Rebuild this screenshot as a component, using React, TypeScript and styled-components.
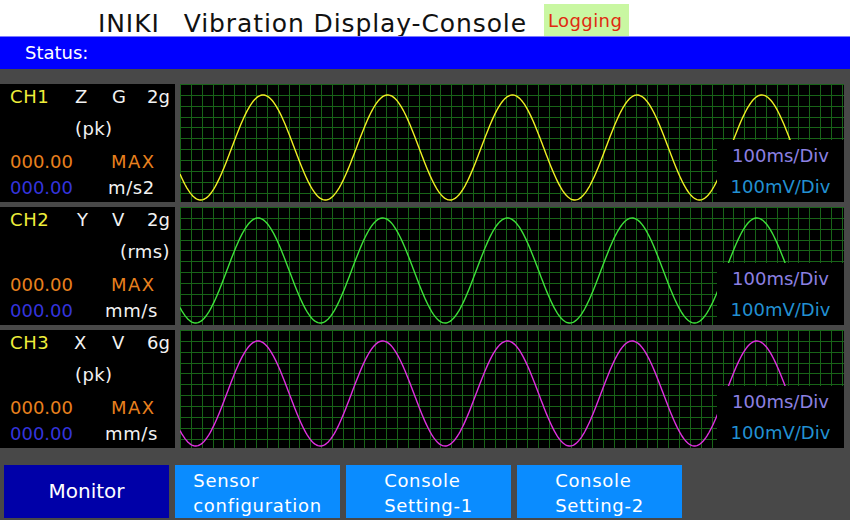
import React from "react";
import styled, { createGlobalStyle } from "styled-components";

const GlobalStyle = createGlobalStyle`
  html, body { margin: 0; padding: 0; background: #484848; }
  body { font-family: "DejaVu Sans", "Liberation Sans", sans-serif; }
  #root { width: 850px; height: 520px; overflow: hidden; }
`;

const Screen = styled.div`
  width: 850px;
  height: 520px;
  display: flex;
  flex-direction: column;
  background: #484848;
`;

const Header = styled.header`
  height: 36px;
  flex: none;
  background: #ffffff;
  display: flex;
  align-items: flex-start;
`;

const Title = styled.h1`
  margin: 0;
  padding: 11px 0 0 98px;
  font-size: 25px;
  line-height: 25px;
  font-weight: normal;
  letter-spacing: 0.9px;
  color: #111111;
  white-space: nowrap;
`;

const TitleGap = styled.span`
  display: inline-block;
  width: 24px;
`;

const Badge = styled.div`
  margin: 4px 0 0 17px;
  height: 32px;
  width: 85px;
  box-sizing: border-box;
  padding: 5px 0 0 4px;
  background: #c9f7a2;
  color: #e02a10;
  font-size: 18px;
  line-height: 24px;
  letter-spacing: 0.4px;
  white-space: nowrap;
`;

const StatusBar = styled.div`
  height: 33px;
  flex: none;
  box-sizing: border-box;
  background: #0000ff;
  border-top: 1px solid #7c7cff;
  color: #ffffff;
  font-size: 18px;
  line-height: 32px;
  padding-left: 25px;
`;

const Main = styled.main`
  flex: 1;
  display: flex;
  flex-direction: column;
  padding: 15px 6px 0 0;
`;

const ChannelList = styled.div`
  display: flex;
  flex-direction: column;
  gap: 5px;
`;

const ChannelRow = styled.section`
  height: 118px;
  display: flex;
  gap: 5px;
`;

const InfoPanel = styled.div`
  width: 175px;
  flex: none;
  background: #000000;
  box-sizing: border-box;
  padding: 0 5px 0 10px;
  display: grid;
  grid-template-columns: 65px 37px 35px 1fr;
  grid-template-rows: 26px 38px 28px 24px;
  align-items: center;
  font-size: 18px;
  line-height: 22px;
  color: #f2f2f2;
  white-space: nowrap;
`;

const Cell = styled.span<{ $color?: string; $col?: string; $align?: string; $shift?: number; $spacing?: number }>`
  color: ${(p) => p.$color ?? "#f2f2f2"};
  grid-column: ${(p) => p.$col ?? "auto"};
  justify-self: ${(p) => p.$align ?? "start"};
  margin-left: ${(p) => p.$shift ?? 0}px;
  letter-spacing: ${(p) => p.$spacing ?? 0}px;
`;

const Scope = styled.div`
  flex: 1;
  position: relative;
  background: #000000;
`;

const ScopeSvg = styled.svg`
  display: block;
`;

const ScaleBox = styled.div`
  position: absolute;
  right: 0;
  bottom: 0;
  width: 127px;
  height: 62px;
  background: #000000;
  display: grid;
  grid-template-rows: 31px 31px;
  align-items: center;
  justify-items: center;
  font-size: 18px;
  line-height: 22px;
  white-space: nowrap;
`;

const ScaleText = styled.span<{ $color: string }>`
  color: ${(p) => p.$color};
`;

const ButtonBar = styled.nav`
  margin-top: 17px;
  padding-left: 4px;
  height: 53px;
  display: flex;
  gap: 6px;
`;

const NavButton = styled.button<{ $active?: boolean }>`
  width: 165px;
  height: 53px;
  border: none;
  margin: 0;
  padding: ${(p) => (p.$active ? "0" : "3px 0 0")};
  background: ${(p) => (p.$active ? "#0000a8" : "#0a8cff")};
  color: #ffffff;
  font-family: "DejaVu Sans", "Liberation Sans", sans-serif;
  font-size: ${(p) => (p.$active ? "20px" : "18px")};
  letter-spacing: ${(p) => (p.$active ? "0" : "0.7px")};
  line-height: 25px;
  display: flex;
  align-items: center;
  justify-content: center;
  cursor: pointer;
`;

const ButtonLabel = styled.span`
  display: inline-block;
  text-align: left;
  white-space: nowrap;
`;

const W = 664;
const H = 118;
const STEP = 10.85;
const PERIOD = 124.7;

function wavePath(peak: number): string {
  const c = 63.5;
  const a = 52.5;
  let d = "";
  for (let x = 0; x <= W; x += 1) {
    const y = c - a * Math.cos((2 * Math.PI * (x - peak)) / PERIOD);
    d += `${x === 0 ? "M" : "L"}${x.toFixed(1)},${y.toFixed(2)} `;
  }
  return d;
}

const gridLines = (() => {
  const lines: React.ReactElement[] = [];
  for (let i = 0; i * STEP <= W; i++) {
    const x = Math.round(i * STEP) + 0.5;
    lines.push(<line key={`v${i}`} x1={x} y1={0} x2={x} y2={H} />);
  }
  for (let j = 0; j * STEP <= H; j++) {
    const y = Math.round(j * STEP) + 0.5;
    lines.push(<line key={`h${j}`} x1={0} y1={y} x2={W} y2={y} />);
  }
  return lines;
})();

type Channel = {
  name: string;
  axis: string;
  axisShift: number;
  kind: string;
  range: string;
  mode: string;
  modeRight: boolean;
  unit: string;
  unitShift: number;
  color: string;
  peak: number;
};

const channels: Channel[] = [
  { name: "CH1", axis: "Z", axisShift: 0, kind: "G", range: "2g", mode: "(pk)", modeRight: false, unit: "m/s2", unitShift: -4, color: "#f0f024", peak: 83 },
  { name: "CH2", axis: "Y", axisShift: 2, kind: "V", range: "2g", mode: "(rms)", modeRight: true, unit: "mm/s", unitShift: -7, color: "#3ee23a", peak: 78 },
  { name: "CH3", axis: "X", axisShift: -1, kind: "V", range: "6g", mode: "(pk)", modeRight: false, unit: "mm/s", unitShift: -7, color: "#e030e0", peak: 78 },
];

const ChannelView: React.FC<{ ch: Channel }> = ({ ch }) => (
  <ChannelRow>
    <InfoPanel>
      <Cell $color="#eeee3a" $spacing={0.6}>{ch.name}</Cell>
      <Cell $shift={ch.axisShift}>{ch.axis}</Cell>
      <Cell>{ch.kind}</Cell>
      <Cell $align="end">{ch.range}</Cell>
      {ch.modeRight ? (
        <Cell $col="1 / 5" $align="end" $spacing={0.4}>{ch.mode}</Cell>
      ) : (
        <Cell $col="2 / 5" $spacing={0.4}>{ch.mode}</Cell>
      )}
      <Cell $color="#e8801e" $col="1 / 3">000.00</Cell>
      <Cell $color="#e8801e" $col="3 / 5" $shift={-1} $spacing={1.4}>MAX</Cell>
      <Cell $color="#3434dc" $col="1 / 3">000.00</Cell>
      <Cell $col="3 / 5" $shift={ch.unitShift} $spacing={0.6}>{ch.unit}</Cell>
    </InfoPanel>
    <Scope>
      <ScopeSvg width={W} height={H} viewBox={`0 0 ${W} ${H}`}>
        <g stroke="#186418" strokeWidth={1}>{gridLines}</g>
        <path d={wavePath(ch.peak)} fill="none" stroke={ch.color} strokeWidth={1.4} />
      </ScopeSvg>
      <ScaleBox>
        <ScaleText $color="#8c80e2">100ms/Div</ScaleText>
        <ScaleText $color="#2291d2">100mV/Div</ScaleText>
      </ScaleBox>
    </Scope>
  </ChannelRow>
);

export default function App() {
  return (
    <>
      <GlobalStyle />
      <Screen>
        <Header>
          <Title>
            INIKI<TitleGap />Vibration Display-Console
          </Title>
          <Badge>Logging</Badge>
        </Header>
        <StatusBar>Status:</StatusBar>
        <Main>
          <ChannelList>
            {channels.map((ch) => (
              <ChannelView key={ch.name} ch={ch} />
            ))}
          </ChannelList>
          <ButtonBar>
            <NavButton $active>
              <ButtonLabel>Monitor</ButtonLabel>
            </NavButton>
            <NavButton>
              <ButtonLabel>
                Sensor
                <br />
                configuration
              </ButtonLabel>
            </NavButton>
            <NavButton>
              <ButtonLabel>
                Console
                <br />
                Setting-1
              </ButtonLabel>
            </NavButton>
            <NavButton>
              <ButtonLabel>
                Console
                <br />
                Setting-2
              </ButtonLabel>
            </NavButton>
          </ButtonBar>
        </Main>
      </Screen>
    </>
  );
}
